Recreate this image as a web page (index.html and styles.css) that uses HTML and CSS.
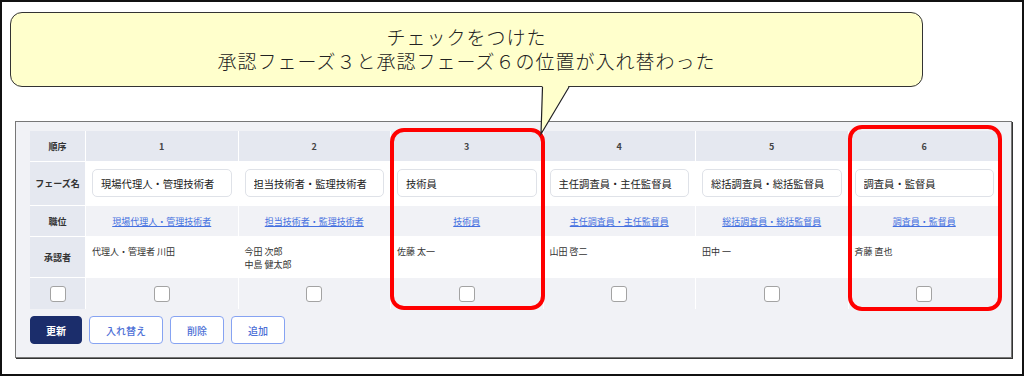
FILE: index.html
```html
<!DOCTYPE html>
<html>
<head>
    <title>承認フェーズ設定</title>
    <link rel="stylesheet" href="styles.css">
</head>
<body>
    <div class="sheet">
        <div class="callout">
            <p>チェックをつけた</p>
            <p>承認フェーズ３と承認フェーズ６の位置が入れ替わった</p>
        </div>

        <div class="panel">
            <div class="phase-grid">
                <div class="cell label head">順序</div>
                <div class="cell head">1</div>
                <div class="cell head">2</div>
                <div class="cell head">3</div>
                <div class="cell head">4</div>
                <div class="cell head">5</div>
                <div class="cell head">6</div>

                <div class="cell label">フェーズ名</div>
                <div class="cell name"><input class="name-input" value="現場代理人・管理技術者"></div>
                <div class="cell name"><input class="name-input" value="担当技術者・監理技術者"></div>
                <div class="cell name"><input class="name-input" value="技術員"></div>
                <div class="cell name"><input class="name-input" value="主任調査員・主任監督員"></div>
                <div class="cell name"><input class="name-input" value="総括調査員・総括監督員"></div>
                <div class="cell name"><input class="name-input" value="調査員・監督員"></div>

                <div class="cell label">職位</div>
                <div class="cell post"><a href="#">現場代理人・管理技術者</a></div>
                <div class="cell post"><a href="#">担当技術者・監理技術者</a></div>
                <div class="cell post"><a href="#">技術員</a></div>
                <div class="cell post"><a href="#">主任調査員・主任監督員</a></div>
                <div class="cell post"><a href="#">総括調査員・総括監督員</a></div>
                <div class="cell post"><a href="#">調査員・監督員</a></div>

                <div class="cell label">承認者</div>
                <div class="cell approver">代理人・管理者 川田</div>
                <div class="cell approver">今田 次郎<br>中島 健太郎</div>
                <div class="cell approver">佐藤 太一</div>
                <div class="cell approver">山田 啓二</div>
                <div class="cell approver">田中 一</div>
                <div class="cell approver">斉藤 直也</div>

                <div class="cell label check"><input type="checkbox"></div>
                <div class="cell check"><input type="checkbox"></div>
                <div class="cell check"><input type="checkbox"></div>
                <div class="cell check"><input type="checkbox"></div>
                <div class="cell check"><input type="checkbox"></div>
                <div class="cell check"><input type="checkbox"></div>
                <div class="cell check"><input type="checkbox"></div>

                <!-- annotation marks -->
                <div class="highlight hl-3"></div>
                <div class="highlight hl-6"></div>
            </div>

            <div class="actions">
                <button class="btn primary">更新</button>
                <button class="btn">入れ替え</button>
                <button class="btn">削除</button>
                <button class="btn">追加</button>
            </div>
        </div>

        <svg class="callout-tail" width="40" height="52" viewBox="0 0 40 52">
            <polygon points="7.5,0 33.5,0 6,48" fill="#ffffcc"/>
            <path d="M7.5,1 L6,48 L34,1" fill="none" stroke="#222" stroke-width="1.2"/>
        </svg>
    </div>
</body>
</html>
```

FILE: styles.css
```css
body { margin: 0; background: #fff; font-family: "Noto Sans CJK JP", "Noto Sans", sans-serif; color: #333; }

.sheet { position: relative; width: 1024px; height: 376px; box-sizing: border-box; border: 2px solid #111; background: #fff; }

.callout { width: 913px; height: 75px; box-sizing: border-box; margin: 10px 0 0 8px; padding-bottom: 2px; border: 1px solid #333; border-radius: 12px; background: #ffffcc; display: flex; flex-direction: column; justify-content: center; align-items: center; font-size: 19px; font-weight: 300; line-height: 24px; letter-spacing: 1px; color: #222; }
.callout p { margin: 0; }
.callout-tail { position: absolute; left: 533px; top: 84px; z-index: 2; }

.panel { width: 997px; box-sizing: border-box; margin: 34px 0 0 13px; padding: 9px 11px 13px 14px; background: #f1f2f6; border: 1px solid #777; box-shadow: 1px 1px 0 #333; }

.phase-grid { position: relative; display: grid; grid-template-columns: 55px repeat(6, 1fr); grid-template-rows: 30px 43px 30px 40px 31px; gap: 1px; background: #fff; }
.cell { background: #fff; font-size: 9px; }
.head { display: flex; align-items: center; justify-content: center; background: #e5e8f0; font-weight: bold; color: #444; }
.label { display: flex; align-items: center; justify-content: center; background: #e5e8f0; font-weight: bold; color: #333; }
.name { padding: 7px 6px 0; }
.name-input { width: 100%; height: 28px; box-sizing: border-box; border: 1px solid #dfe2e8; border-radius: 5px; padding: 0 8px; font: 10.3px "Noto Sans CJK JP", sans-serif; color: #222; background: #fff; }
.post { display: flex; align-items: center; justify-content: center; background: #f1f2f6; }
.post a { color: #4470e0; font-size: 9px; }
.approver { padding: 8px 6px 0; line-height: 13px; color: #333; }
.check { display: flex; align-items: center; justify-content: center; background: #f1f2f6; }
.check.label { background: #e5e8f0; }
.check input { appearance: none; margin: 0; width: 16px; height: 16px; box-sizing: border-box; border: 1px solid #a3a3a3; border-radius: 3px; background: #fff; }

.highlight { position: absolute; border: 4px solid #ff0000; border-radius: 14px; pointer-events: none; }
.hl-3 { grid-column: 4 / 5; grid-row: 1 / 6; inset: -3px -2px -1px -1px; }
.hl-6 { grid-column: 7 / 8; grid-row: 1 / 6; inset: -6px -2px -2px -1px; }

.actions { display: flex; gap: 7px; margin-top: 7px; }
.btn { height: 28px; padding: 0 16px; border: 1px solid #86a3f2; border-radius: 4px; background: #fff; color: #4d6fd6; font: 500 10px "Noto Sans CJK JP", sans-serif; }
.btn.primary { padding: 0 15px; background: #1b2d6b; border-color: #1b2d6b; color: #fff; font-weight: bold; }
```
